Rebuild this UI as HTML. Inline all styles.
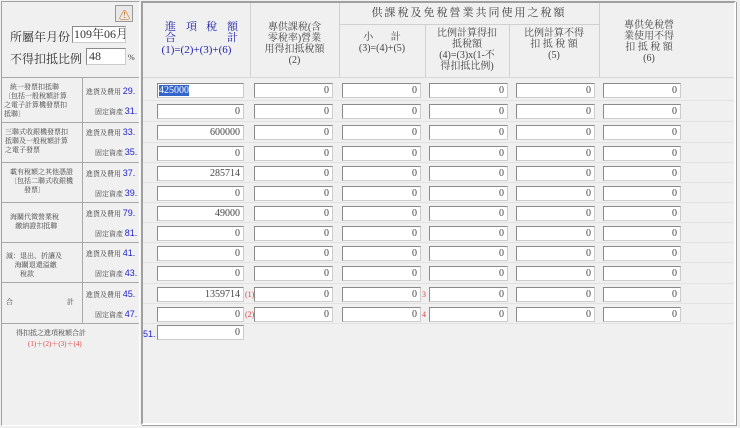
<!DOCTYPE html>
<html><head><meta charset="utf-8"><style>
body{margin:0;width:740px;height:428px;background:#f0f0f0;position:relative;overflow:hidden;font-family:"Liberation Serif","Noto Serif CJK SC","Noto Sans CJK TC",serif;color:#333}
div,span{position:absolute;box-sizing:border-box}
.in{height:15px;background:#fff;border:1px solid #8a8a8a;border-right-color:#ccc;border-bottom-color:#ccc;font-size:10px;text-align:right;padding-right:3px;line-height:13px;color:#444;white-space:nowrap;overflow:hidden}
.t{font-size:7px;line-height:9px;color:#444;white-space:nowrap}
.b{color:#2222cc;font-family:"Liberation Sans",sans-serif;font-size:9px}
.h{font-size:10px;line-height:11px;text-align:center;color:#444;white-space:nowrap}
.r{color:#d44;font-size:8px}
.hl{height:1px;background:#a8a8a8}
.vl{width:1px;background:#a8a8a8}
</style></head><body>
<div style="left:1px;top:1px;width:139px;height:425px;border:1px solid #a0a0a0;border-right-color:#fff;border-bottom-color:#fff"></div>
<div class="hl" style="left:2px;top:77px;width:137px"></div>
<div class="hl" style="left:2px;top:122px;width:137px"></div>
<div class="hl" style="left:2px;top:162px;width:137px"></div>
<div class="hl" style="left:2px;top:202px;width:137px"></div>
<div class="hl" style="left:2px;top:242px;width:137px"></div>
<div class="hl" style="left:2px;top:282px;width:137px"></div>
<div class="hl" style="left:2px;top:323px;width:137px"></div>
<div class="vl" style="left:82px;top:77px;height:246px"></div>
<div style="left:115px;top:5px;width:18px;height:17px;border:1px solid #999;background:#e8e8e8"><span style="left:3px;top:1px;font-size:11px;color:#c60">⚠</span></div>
<span style="left:10px;top:28px;font-size:12px">所屬年月份</span>
<div class="in" style="left:72px;top:26px;width:54px;height:17px;font-size:12px;text-align:left;padding-left:1px;line-height:15px;color:#333">109年06月</div>
<span style="left:10px;top:50px;font-size:12px">不得扣抵比例</span>
<div class="in" style="left:86px;top:48px;width:40px;height:17px;font-size:12px;text-align:left;padding-left:2px;line-height:15px;color:#333">48</div>
<span style="left:128px;top:53px;font-size:8px">%</span>

<div class="t" style="left:10px;top:83px">統一發票扣抵聯</div>
<div class="t" style="left:4px;top:92px">〔包括一般稅額計算<br>之電子計算機發票扣<br>抵聯〕</div>
<div class="t" style="left:5px;top:128px">三聯式收銀機發票扣<br>抵聯及一般稅額計算<br>之電子發票</div>
<div class="t" style="left:10px;top:168px">載有稅額之其他憑證<br>〔包括二聯式收銀機<br>&nbsp;&nbsp;&nbsp;&nbsp;&nbsp;&nbsp;&nbsp;&nbsp;發票〕</div>
<div class="t" style="left:10px;top:213px">海關代徵營業稅<br>&nbsp;&nbsp;&nbsp;繳納證扣抵聯</div>
<div class="t" style="left:6px;top:252px">減：退出、折讓及<br>&nbsp;&nbsp;&nbsp;&nbsp;&nbsp;海關退還溢繳<br>&nbsp;&nbsp;&nbsp;&nbsp;&nbsp;&nbsp;&nbsp;&nbsp;稅款</div>
<div class="t" style="left:6px;top:298px">合</div><div class="t" style="left:67px;top:298px">計</div>
<div class="t" style="left:16px;top:329px">得扣抵之進項稅額合計</div>
<div class="t r" style="left:28px;top:340px;font-size:7px">(1)＋(2)＋(3)＋(4)</div>

<div class="t" style="left:86px;top:87px">進貨及費用 <span class="b" style="position:static">29.</span></div>
<div class="t" style="left:95px;top:107px">固定資產 <span class="b" style="position:static">31.</span></div>
<div class="t" style="left:86px;top:128px">進貨及費用 <span class="b" style="position:static">33.</span></div>
<div class="t" style="left:95px;top:148px">固定資產 <span class="b" style="position:static">35.</span></div>
<div class="t" style="left:86px;top:169px">進貨及費用 <span class="b" style="position:static">37.</span></div>
<div class="t" style="left:95px;top:189px">固定資產 <span class="b" style="position:static">39.</span></div>
<div class="t" style="left:86px;top:209px">進貨及費用 <span class="b" style="position:static">79.</span></div>
<div class="t" style="left:95px;top:229px">固定資產 <span class="b" style="position:static">81.</span></div>
<div class="t" style="left:86px;top:249px">進貨及費用 <span class="b" style="position:static">41.</span></div>
<div class="t" style="left:95px;top:269px">固定資產 <span class="b" style="position:static">43.</span></div>
<div class="t" style="left:86px;top:290px">進貨及費用 <span class="b" style="position:static">45.</span></div>
<div class="t" style="left:95px;top:310px">固定資產 <span class="b" style="position:static">47.</span></div>

<div style="left:141px;top:1px;width:595px;height:424px;border:2px solid #a0a0a0;border-right-color:#fff;border-bottom-color:#fff;box-shadow:1px 1px 0 #a0a0a0"></div>
<div class="hl" style="left:143px;top:77px;width:591px;background:#d8d8d8"></div>
<div class="vl" style="left:250px;top:3px;height:74px;background:#d0d0d0"></div>
<div class="vl" style="left:339px;top:3px;height:74px;background:#d0d0d0"></div>
<div class="vl" style="left:599px;top:3px;height:74px;background:#d0d0d0"></div>
<div class="hl" style="left:339px;top:24px;width:260px;background:#d0d0d0"></div>
<div class="vl" style="left:425px;top:24px;height:53px;background:#d0d0d0"></div>
<div class="vl" style="left:509px;top:24px;height:53px;background:#d0d0d0"></div>
<span style="left:165px;top:21px;font-size:11px;color:#2222aa;line-height:12px">進</span>
<span style="left:186px;top:21px;font-size:11px;color:#2222aa;line-height:12px">項</span>
<span style="left:206px;top:21px;font-size:11px;color:#2222aa;line-height:12px">稅</span>
<span style="left:227px;top:21px;font-size:11px;color:#2222aa;line-height:12px">額</span>
<span style="left:165px;top:32px;font-size:11px;color:#2222aa;line-height:12px">合</span>
<span style="left:227px;top:32px;font-size:11px;color:#2222aa;line-height:12px">計</span>
<div class="h" style="left:143px;top:45px;width:107px;font-size:11px;color:#2222aa">(1)=(2)+(3)+(6)</div>
<div class="h" style="left:250px;top:22px;width:89px">專供課稅(含<br>零稅率)營業<br>用得扣抵稅額<br>(2)</div>
<div class="h" style="left:339px;top:8px;width:260px;font-size:11px;letter-spacing:2px">供課稅及免稅營業共同使用之稅額</div>
<div class="h" style="left:339px;top:32px;width:86px">小&nbsp;&nbsp;&nbsp;&nbsp;&nbsp;&nbsp;&nbsp;計<br>(3)=(4)+(5)</div>
<div class="h" style="left:425px;top:28px;width:84px">比例計算得扣<br>抵稅額<br>(4)=(3)x(1-不<br>得扣抵比例)</div>
<div class="h" style="left:509px;top:28px;width:90px">比例計算不得<br>扣 抵 稅 額<br>(5)</div>
<div class="h" style="left:599px;top:20px;width:100px">專供免稅營<br>業使用不得<br>扣 抵 稅 額<br>(6)</div>

<div class="hl" style="left:143px;top:100px;width:591px;background:#e2e2e2"></div>
<div class="hl" style="left:143px;top:121px;width:591px;background:#e2e2e2"></div>
<div class="hl" style="left:143px;top:142px;width:591px;background:#e2e2e2"></div>
<div class="hl" style="left:143px;top:162px;width:591px;background:#e2e2e2"></div>
<div class="hl" style="left:143px;top:182px;width:591px;background:#e2e2e2"></div>
<div class="hl" style="left:143px;top:202px;width:591px;background:#e2e2e2"></div>
<div class="hl" style="left:143px;top:222px;width:591px;background:#e2e2e2"></div>
<div class="hl" style="left:143px;top:242px;width:591px;background:#e2e2e2"></div>
<div class="hl" style="left:143px;top:262px;width:591px;background:#e2e2e2"></div>
<div class="hl" style="left:143px;top:283px;width:591px;background:#e2e2e2"></div>
<div class="hl" style="left:143px;top:303px;width:591px;background:#e2e2e2"></div>
<div class="hl" style="left:143px;top:323px;width:591px;background:#e2e2e2"></div>

<div class="in" style="left:157px;top:83px;width:87px;text-align:left;padding-left:1px"><span style="position:static;background:#3366cc;color:#fff">425000</span></div>
<div class="in" style="left:157px;top:104px;width:87px">0</div>
<div class="in" style="left:157px;top:125px;width:87px">600000</div>
<div class="in" style="left:157px;top:146px;width:87px">0</div>
<div class="in" style="left:157px;top:166px;width:87px">285714</div>
<div class="in" style="left:157px;top:186px;width:87px">0</div>
<div class="in" style="left:157px;top:206px;width:87px">49000</div>
<div class="in" style="left:157px;top:226px;width:87px">0</div>
<div class="in" style="left:157px;top:246px;width:87px">0</div>
<div class="in" style="left:157px;top:266px;width:87px">0</div>
<div class="in" style="left:157px;top:287px;width:87px">1359714</div>
<div class="in" style="left:157px;top:307px;width:87px">0</div>
<div class="in" style="left:157px;top:325px;width:87px">0</div>
<span class="b" style="left:143px;top:329px">51.</span>
<span class="r" style="left:245px;top:290px">(1)</span>
<span class="r" style="left:245px;top:310px">(2)</span>
<span class="r" style="left:422px;top:290px">3</span>
<span class="r" style="left:422px;top:310px">4</span>

<div class="in" style="left:254px;top:83px;width:79px">0</div><div class="in" style="left:342px;top:83px;width:79px">0</div><div class="in" style="left:429px;top:83px;width:79px">0</div><div class="in" style="left:516px;top:83px;width:79px">0</div><div class="in" style="left:603px;top:83px;width:78px">0</div>
<div class="in" style="left:254px;top:104px;width:79px">0</div><div class="in" style="left:342px;top:104px;width:79px">0</div><div class="in" style="left:429px;top:104px;width:79px">0</div><div class="in" style="left:516px;top:104px;width:79px">0</div><div class="in" style="left:603px;top:104px;width:78px">0</div>
<div class="in" style="left:254px;top:125px;width:79px">0</div><div class="in" style="left:342px;top:125px;width:79px">0</div><div class="in" style="left:429px;top:125px;width:79px">0</div><div class="in" style="left:516px;top:125px;width:79px">0</div><div class="in" style="left:603px;top:125px;width:78px">0</div>
<div class="in" style="left:254px;top:146px;width:79px">0</div><div class="in" style="left:342px;top:146px;width:79px">0</div><div class="in" style="left:429px;top:146px;width:79px">0</div><div class="in" style="left:516px;top:146px;width:79px">0</div><div class="in" style="left:603px;top:146px;width:78px">0</div>
<div class="in" style="left:254px;top:166px;width:79px">0</div><div class="in" style="left:342px;top:166px;width:79px">0</div><div class="in" style="left:429px;top:166px;width:79px">0</div><div class="in" style="left:516px;top:166px;width:79px">0</div><div class="in" style="left:603px;top:166px;width:78px">0</div>
<div class="in" style="left:254px;top:186px;width:79px">0</div><div class="in" style="left:342px;top:186px;width:79px">0</div><div class="in" style="left:429px;top:186px;width:79px">0</div><div class="in" style="left:516px;top:186px;width:79px">0</div><div class="in" style="left:603px;top:186px;width:78px">0</div>
<div class="in" style="left:254px;top:206px;width:79px">0</div><div class="in" style="left:342px;top:206px;width:79px">0</div><div class="in" style="left:429px;top:206px;width:79px">0</div><div class="in" style="left:516px;top:206px;width:79px">0</div><div class="in" style="left:603px;top:206px;width:78px">0</div>
<div class="in" style="left:254px;top:226px;width:79px">0</div><div class="in" style="left:342px;top:226px;width:79px">0</div><div class="in" style="left:429px;top:226px;width:79px">0</div><div class="in" style="left:516px;top:226px;width:79px">0</div><div class="in" style="left:603px;top:226px;width:78px">0</div>
<div class="in" style="left:254px;top:246px;width:79px">0</div><div class="in" style="left:342px;top:246px;width:79px">0</div><div class="in" style="left:429px;top:246px;width:79px">0</div><div class="in" style="left:516px;top:246px;width:79px">0</div><div class="in" style="left:603px;top:246px;width:78px">0</div>
<div class="in" style="left:254px;top:266px;width:79px">0</div><div class="in" style="left:342px;top:266px;width:79px">0</div><div class="in" style="left:429px;top:266px;width:79px">0</div><div class="in" style="left:516px;top:266px;width:79px">0</div><div class="in" style="left:603px;top:266px;width:78px">0</div>
<div class="in" style="left:254px;top:287px;width:79px">0</div><div class="in" style="left:342px;top:287px;width:79px">0</div><div class="in" style="left:429px;top:287px;width:79px">0</div><div class="in" style="left:516px;top:287px;width:79px">0</div><div class="in" style="left:603px;top:287px;width:78px">0</div>
<div class="in" style="left:254px;top:307px;width:79px">0</div><div class="in" style="left:342px;top:307px;width:79px">0</div><div class="in" style="left:429px;top:307px;width:79px">0</div><div class="in" style="left:516px;top:307px;width:79px">0</div><div class="in" style="left:603px;top:307px;width:78px">0</div>
</body></html>
